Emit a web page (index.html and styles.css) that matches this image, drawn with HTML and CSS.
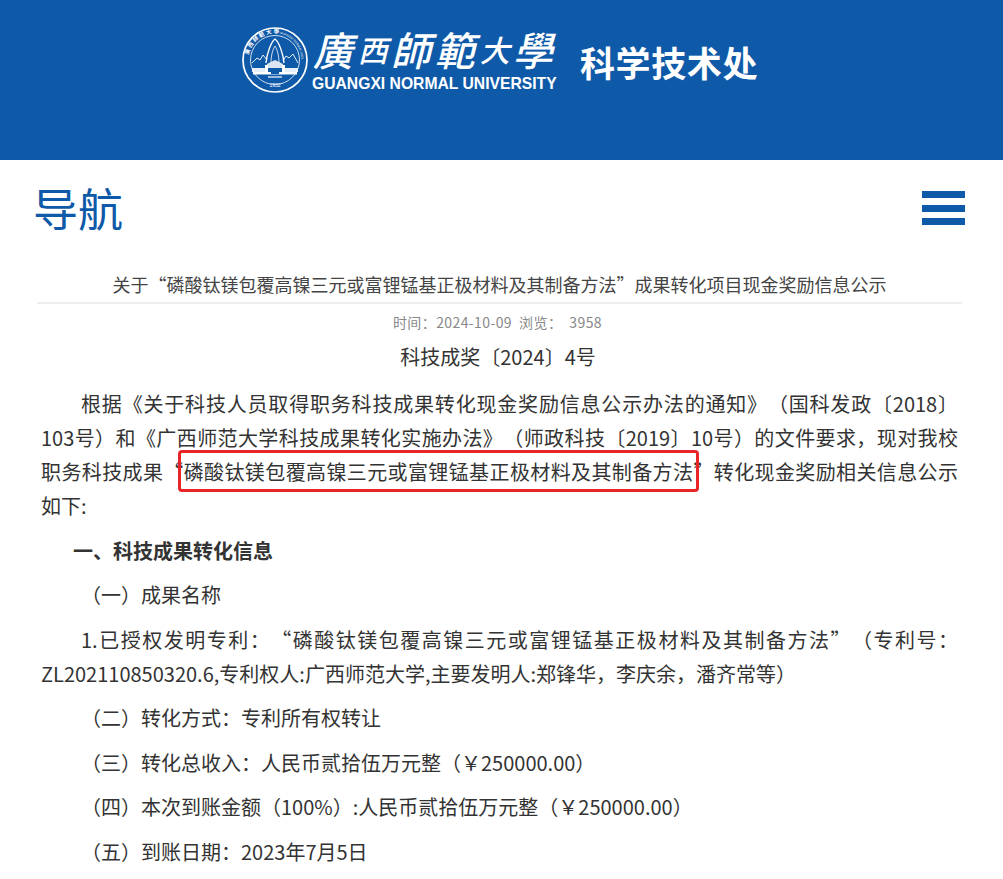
FILE: index.html
```html
<!DOCTYPE html>
<html lang="zh-CN">
<head>
    <meta charset="UTF-8">
    <meta name="viewport" content="width=device-width, initial-scale=1.0">
    <title>科学技术处</title>
    <link rel="stylesheet" href="styles.css">
</head>
<body>
    <header class="banner">
        <div class="logo">
            <svg class="seal" viewBox="0 0 66 66" width="66" height="66">
                <defs>
                    <path id="ringLeft" d="M6.5 36 A26.5 26.5 0 0 1 36 6.7"/>
                    <path id="ringRight" d="M38 6.9 A26.5 26.5 0 0 1 59.4 33"/>
                </defs>
                <circle cx="33" cy="33" r="32" fill="none" stroke="#fff" stroke-width="1.7"/>
                <circle cx="33" cy="33" r="24.5" fill="none" stroke="#fff" stroke-width="0.8"/>
                <text class="seal-cn"><textPath href="#ringLeft" startOffset="8">廣西師範大學</textPath></text>
                <text class="seal-en"><textPath href="#ringRight">GUANGXI NORMAL UNIV</textPath></text>
                <!-- hills and tower -->
                <path d="M10 36 L15 31 L18 33 L21 28 L25 33 M56 36 L51 27 L47 31 L44 29 L41 34" fill="none" stroke="#fff" stroke-width="0.9"/>
                <path d="M24 36 C25 26 29 15 33 12 C37 15 41 26 42 36" fill="none" stroke="#fff" stroke-width="1.4"/>
                <path d="M29 36 C29 28 31 22 33 19 C35 22 37 28 37 36" fill="none" stroke="#fff" stroke-width="0.8"/>
                <!-- main building -->
                <path d="M25 37 L33 33 L41 37 V41 H25 Z" fill="#fff" opacity="0.85"/>
                <path d="M10 41 H23 V45 H10 Z M43 41 H56 V45 H43 Z" fill="#fff" opacity="0.9"/>
                <path d="M11 45 H55 V47.5 H11 Z" fill="#fff"/>
                <path d="M23 38 H26 V47 H23 Z M40 38 H43 V47 H40 Z" fill="#fff"/>
                <path d="M29 42 H37 V47 H29 Z" fill="#0f5aa8"/>
                <path d="M26 50 H40" stroke="#fff" stroke-width="1.2"/>
                <text class="seal-year" x="33" y="59.5" text-anchor="middle">1932</text>
            </svg>
            <div class="logo-name">
                <div class="logo-cn"><span>廣</span><span class="small">西</span><span>師</span><span>範</span><span class="small">大</span><span>學</span></div>
                <div class="logo-en">GUANGXI NORMAL UNIVERSITY</div>
            </div>
            <div class="dept">科学技术处</div>
        </div>
    </header>

    <nav class="navbar">
        <div class="nav-title">导航</div>
        <div class="nav-toggle">
            <span></span>
            <span></span>
            <span></span>
        </div>
    </nav>

    <main class="article">
        <h1>关于“磷酸钛镁包覆高镍三元或富锂锰基正极材料及其制备方法”成果转化项目现金奖励信息公示</h1>
        <div class="meta">时间：2024-10-09&nbsp; 浏览： &nbsp;3958</div>
        <div class="doc-no">科技成奖〔2024〕4号</div>

        <p>根据《关于科技人员取得职务科技成果转化现金奖励信息公示办法的通知》（国科发政〔2018〕103号）和《广西师范大学科技成果转化实施办法》（师政科技〔2019〕10号）的文件要求，现对我校职务科技成果“<span class="mark">磷酸钛镁包覆高镍三元或富锂锰基正极材料及其制备方法</span>”转化现金奖励相关信息公示如下:</p>
        <p class="section">一、科技成果转化信息</p>
        <p>（一）成果名称</p>
        <p>1.已授权发明专利：“磷酸钛镁包覆高镍三元或富锂锰基正极材料及其制备方法”（专利号：ZL202110850320.6,专利权人:广西师范大学,主要发明人:郑锋华，李庆余，潘齐常等）</p>
        <p>（二）转化方式：专利所有权转让</p>
        <p>（三）转化总收入：人民币贰拾伍万元整（￥250000.00）</p>
        <p>（四）本次到账金额（100%）:人民币贰拾伍万元整（￥250000.00）</p>
        <p>（五）到账日期：2023年7月5日</p>
    </main>
</body>
</html>
```

FILE: styles.css
```css
* {
    margin: 0;
    padding: 0;
    box-sizing: border-box;
}

body {
    font-family: "Noto Sans CJK SC", "Noto Sans", sans-serif;
    background: #fff;
    color: #333;
    overflow: hidden;
    text-spacing-trim: space-all;
}

.banner {
    height: 160px;
    background: #0f5aa8;
    padding: 27px 0 0 242px;
}

.logo {
    display: flex;
    align-items: flex-start;
    color: #fff;
}

.seal-year {
    font-family: "Liberation Sans", sans-serif;
    font-size: 5px;
    fill: #fff;
}

.seal-cn {
    font-family: "Noto Sans CJK TC", sans-serif;
    font-size: 5.5px;
    font-weight: 700;
    letter-spacing: 1.5px;
    fill: #fff;
}

.seal-en {
    font-family: "Liberation Sans", sans-serif;
    font-size: 3px;
    fill: #fff;
}

.logo-name {
    margin-left: 4px;
    width: 245px;
}

.logo-cn {
    display: flex;
    align-items: center;
    justify-content: space-between;
    height: 44px;
    padding: 0 0 0 5px;
    font-family: "Noto Sans CJK TC", sans-serif;
    font-size: 40px;
    line-height: 44px;
    font-weight: 500;
    white-space: nowrap;
    transform: skewX(-14deg);
}

.logo-cn .small {
    font-size: 30px;
}

.logo-en {
    font-family: "Liberation Sans", sans-serif;
    font-size: 15.7px;
    line-height: 18px;
    font-weight: 700;
    white-space: nowrap;
    margin-top: 4px;
}

.dept {
    font-size: 35px;
    line-height: 44px;
    font-weight: 700;
    letter-spacing: 0.6px;
    margin: 13px 0 0 23px;
}

.navbar {
    height: 100px;
    display: flex;
    align-items: center;
    justify-content: space-between;
    padding: 0 38px 0 33px;
}

.nav-title {
    font-size: 45px;
    line-height: 60px;
    color: #0f5aa8;
    margin-top: -4px;
}

.nav-toggle {
    width: 43px;
    display: flex;
    flex-direction: column;
    gap: 6.5px;
    margin-top: -4px;
}

.nav-toggle span {
    height: 7px;
    background: #0f5aa8;
}

.article {
    margin: 0 41px 0 37px;
}

h1 {
    font-size: 18px;
    font-weight: 400;
    line-height: 36px;
    padding-top: 6px;
    text-align: center;
    color: #444;
    border-bottom: 2px solid #eee;
}

.meta {
    font-size: 14px;
    line-height: 20px;
    text-align: center;
    color: #888;
    margin: 8px 4px 0 0;
    letter-spacing: 0.4px;
}

.doc-no {
    font-size: 20px;
    line-height: 34px;
    text-align: center;
    margin: 8px 3px 0 0;
}

p {
    font-size: 20px;
    line-height: 34px;
    text-indent: 40px;
    text-align: justify;
    padding: 0 4px;
    margin-bottom: 10.5px;
    color: #333;
}

.doc-no + p {
    margin-top: 13px;
}

.section {
    font-weight: 700;
    text-indent: 32px;
}

.mark {
    position: relative;
}

.mark::after {
    content: "";
    position: absolute;
    top: -7px;
    bottom: -6px;
    left: -5px;
    right: -6px;
    border: 3px solid #e8262a;
    border-radius: 4px;
}
```
